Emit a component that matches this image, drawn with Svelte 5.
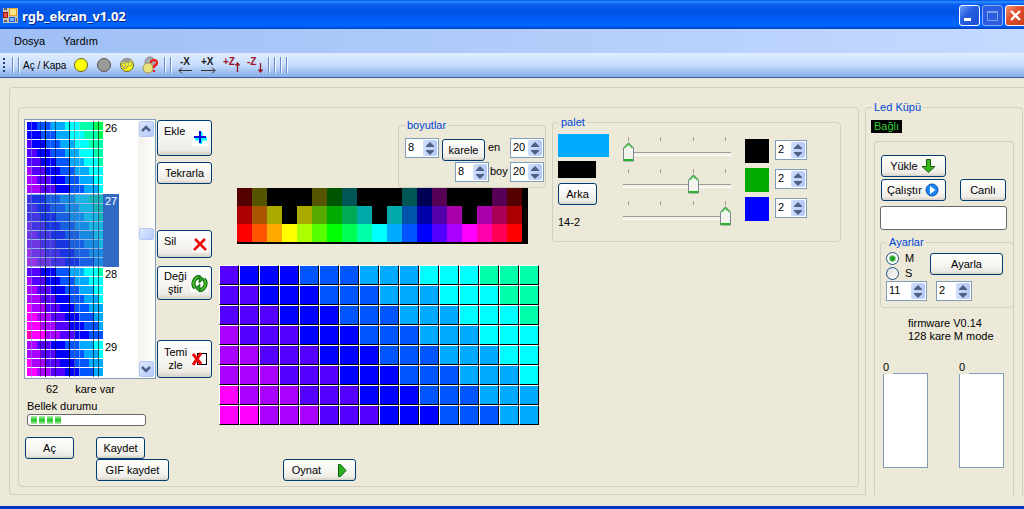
<script lang="ts">
	// Hue steps the cube can show, in the order the wave runs through them
	const wave = [
		'#ff00aa',
		'#ff00ff',
		'#aa00ff',
		'#5500ff',
		'#0000ff',
		'#0055ff',
		'#00aaff',
		'#00ffff',
		'#00ffaa',
		'#00ff55'
	];

	const k = '#000000';
	const colorTable = [
		'#550000', '#555500', k, k, k, '#555500', '#005500', '#005555', k, k, k, '#005555', '#000055', '#550055', k, k, k, '#550055', '#550000',
		'#aa0000', '#aa5500', '#aaaa00', k, '#aaaa00', '#55aa00', '#00aa00', '#00aa55', '#00aaaa', k, '#00aaaa', '#0055aa', '#0000aa', '#5500aa', '#aa00aa', k, '#aa00aa', '#aa0055', '#aa0000',
		'#ff0000', '#ff5500', '#ffaa00', '#ffff00', '#aaff00', '#55ff00', '#00ff00', '#00ff55', '#00ffaa', '#00ffff', '#00aaff', '#0055ff', '#0000ff', '#5500ff', '#aa00ff', '#ff00ff', '#ff00aa', '#ff0055', '#ff0000'
	];

	function makeFrame(shift: number) {
		const cells: string[] = [];
		for (let r = 0; r < 8; r++) {
			for (let c = 0; c < 16; c++) {
				cells.push(wave[3 + Math.floor((c - r + shift) / 3)]);
			}
		}
		return cells;
	}

	const frames = [
		{ nr: 26, cells: makeFrame(4) },
		{ nr: 27, cells: makeFrame(2) },
		{ nr: 28, cells: makeFrame(0) },
		{ nr: 29, cells: makeFrame(-2) }
	];

	let selected = $state(27);
	let current = $derived(frames.find((f) => f.nr === selected)!.cells);

	let sizes = $state({ x: 8, y: 8, en: 20, boy: 20, port: 11, speed: 2 });
	let mode = $state('M');
	let message = $state('');

	let channels = $state([
		{ name: 'Kırmızı', level: 0, step: 2, color: '#000000' },
		{ name: 'Yeşil', level: 2, step: 2, color: '#00aa00' },
		{ name: 'Mavi', level: 3, step: 2, color: '#0000ff' }
	]);
</script>

{#snippet spinner(label: string, value: number, set: (v: number) => void, size: string)}
	<span class="spinner {size}">
		<input type="number" aria-label={label} {value} oninput={(e) => set(Number(e.currentTarget.value))} />
		<span class="arrows">
			<button type="button" aria-label="{label} artır" onclick={() => set(value + 1)}>
				<svg viewBox="0 0 8 5" width="8" height="5"><path d="M4 0L8 4V5H0V4z" fill="#4d6185" /></svg>
			</button>
			<button type="button" aria-label="{label} azalt" onclick={() => set(value - 1)}>
				<svg viewBox="0 0 8 5" width="8" height="5"><path d="M4 5L8 1V0H0V1z" fill="#4d6185" /></svg>
			</button>
		</span>
	</span>
{/snippet}

<div class="window">
	<header class="titlebar">
		<svg width="15" height="15" viewBox="0 0 15 15">
			<rect width="15" height="15" fill="#c8c4b4" />
			<rect x="6" y="0" width="8" height="8" fill="#e8a818" />
			<rect x="7" y="1" width="6" height="6" fill="#ffe48c" />
			<rect x="0" y="4" width="5" height="6" fill="#a01810" />
			<rect x="1" y="5" width="3" height="4" fill="#e85040" />
			<rect x="6" y="9" width="6" height="5" fill="#2860d0" />
			<rect x="7" y="10" width="4" height="3" fill="#80b0ff" />
			<path d="M1 0h3v2H1zM1 12h3v2H1zM13 10h1v4h-1z" fill="#5c6270" />
		</svg>
		<h1>rgb_ekran_v1.02</h1>
		<button type="button" class="caption" aria-label="Simge durumuna küçült">
			<svg width="19" height="19" viewBox="0 0 19 19"><rect x="4" y="12" width="7" height="3" fill="#fff" /></svg>
		</button>
		<button type="button" class="caption dim" aria-label="Ekranı kapla" disabled>
			<svg width="19" height="19" viewBox="0 0 19 19"><path d="M4.5 5.5h10v9h-10zM4 6.5h10" fill="none" stroke="#7e9eee" /></svg>
		</button>
		<button type="button" class="caption close" aria-label="Kapat">
			<svg width="19" height="19" viewBox="0 0 19 19"><path d="M5 5l9 9M14 5l-9 9" stroke="#fff" stroke-width="2.4" /></svg>
		</button>
	</header>

	<nav class="menubar">
		<button type="button">Dosya</button>
		<button type="button">Yardım</button>
	</nav>

	<div class="toolbar">
		<span class="grip"></span>
		<span class="sep"></span>
		<span class="sep"></span>
		<span class="tool-label">Aç / Kapa</span>
		<button type="button" aria-label="Hepsini aç">
			<svg width="16" height="16" viewBox="0 0 16 16"><circle cx="8" cy="8" r="6.5" fill="#ff0" stroke="#66642c" /></svg>
		</button>
		<button type="button" aria-label="Hepsini kapat">
			<svg width="16" height="16" viewBox="0 0 16 16"><circle cx="8" cy="8" r="6.5" fill="#999" stroke="#555" /></svg>
		</button>
		<button type="button" aria-label="Tersle">
			<svg width="16" height="16" viewBox="0 0 16 16">
				<circle cx="8" cy="8" r="6.5" fill="#ff0" stroke="#66642c" />
				<path d="M2 6a6.3 6.3 0 0 1 11-3L8 6 5 5z" fill="#999" />
				<circle cx="5" cy="8" r="2" fill="none" stroke="#999" />
				<circle cx="11" cy="7" r="2" fill="none" stroke="#999" />
				<path d="M4 11q3 2 5-2" fill="none" stroke="#777" />
			</svg>
		</button>
		<button type="button" aria-label="Rastgele">
			<svg width="18" height="18" viewBox="0 0 18 18">
				<circle cx="9" cy="6" r="5" fill="#aaa" stroke="#888" />
				<circle cx="7" cy="12" r="5" fill="#eae27a" stroke="#a09a5c" />
				<path d="M10 7q0-3 3-3t3 3q0 2-3 3v2M13 14v2" fill="none" stroke="#f01818" stroke-width="2.2" />
			</svg>
		</button>
		<span class="sep"></span>
		<span class="sep"></span>
		<button type="button" aria-label="X azalt">
			<svg width="18" height="18" viewBox="0 0 18 18">
				<text x="4" y="9">-X</text>
				<path d="M3 14.5h13M6 11.5l-3 3 3 3" fill="none" stroke="#333" />
			</svg>
		</button>
		<button type="button" aria-label="X artır">
			<svg width="18" height="18" viewBox="0 0 18 18">
				<text x="2" y="9">+X</text>
				<path d="M2 14.5h14M13 11.5l3 3-3 3" fill="none" stroke="#333" />
			</svg>
		</button>
		<button type="button" class="red" aria-label="Z artır">
			<svg width="18" height="18" viewBox="0 0 18 18">
				<text x="1" y="9">+Z</text>
				<path d="M15.5 16V7M13.500 9.500l2-2.500 2 2.500" fill="none" stroke="#901020" stroke-width="1.3" />
			</svg>
		</button>
		<button type="button" class="red" aria-label="Z azalt">
			<svg width="18" height="18" viewBox="0 0 18 18">
				<text x="2" y="9">-Z</text>
				<path d="M15.5 7v9M13.500 13.500l2 2.500 2-2.500" fill="none" stroke="#901020" stroke-width="1.3" />
			</svg>
		</button>
		<span class="sep"></span>
		<span class="sep"></span>
		<span class="sep"></span>
		<span class="sep"></span>
	</div>

	<main class="outer">
		<section class="editor">
			<div class="left">
				<div class="list-row">
					<div class="listbox">
						<ul>
							{#each frames as frame (frame.nr)}
								<li class:selected={frame.nr === selected}>
									<button type="button" onclick={() => (selected = frame.nr)}>
										<span class="thumb">
											{#each frame.cells as color}
												<i style:background-color={color}></i>
											{/each}
										</span>
										<span class="nr">{frame.nr}</span>
									</button>
								</li>
							{/each}
						</ul>
						<div class="scrollbar">
							<button type="button" aria-label="Yukarı">
								<svg width="10" height="8" viewBox="0 0 10 8"><path d="M1 6l4-4 4 4" fill="none" stroke="#4d6185" stroke-width="2.5" /></svg>
							</button>
							<span class="knob"></span>
							<button type="button" aria-label="Aşağı">
								<svg width="10" height="8" viewBox="0 0 10 8"><path d="M1 2l4 4 4-4" fill="none" stroke="#4d6185" stroke-width="2.5" /></svg>
							</button>
						</div>
					</div>

					<div class="actions">
						<button type="button" class="btn add">
							<span>Ekle</span>
							<svg width="16" height="16" viewBox="0 0 16 16">
								<rect width="16" height="16" fill="#fff" />
								<path d="M9 2v12M3 9h12" stroke="#0ff" stroke-width="3" />
								<path d="M8 1v12M2 7h12" stroke="#0000e0" stroke-width="2" />
							</svg>
						</button>
						<button type="button" class="btn repeat">Tekrarla</button>
						<button type="button" class="btn delete">
							<span>Sil</span>
							<svg width="16" height="16" viewBox="0 0 16 16">
								<rect width="16" height="16" fill="#fff" />
								<path d="M3 3l11 11M13 3L2 14" stroke="#f00808" stroke-width="2.5" />
							</svg>
						</button>
						<button type="button" class="btn change">
							<span>Deği<br />ştir</span>
							<svg width="17" height="17" viewBox="0 0 17 17">
								<rect width="17" height="17" fill="#fff" />
								<path d="M4 13Q1 9 3.500 5T9 2.500M13 4q3 4 .5 8T8 14.500" fill="none" stroke="#0c6810" stroke-width="4" />
								<path d="M4 13Q1 9 3.500 5T9 2.500M13 4q3 4 .5 8T8 14.500" fill="none" stroke="#48bc28" stroke-width="2" />
								<path d="M8 0l5 4-5 4zM9 9l-5 4 5 4z" fill="#28982c" stroke="#0c6810" stroke-width=".7" />
							</svg>
						</button>
						<button type="button" class="btn clear">
							<span>Temi<br />zle</span>
							<svg width="16" height="16" viewBox="0 0 16 16">
								<rect width="16" height="16" fill="#fff" />
								<rect x="5.500" y="2.500" width="9" height="11" fill="#fff" stroke="#000" />
								<path d="M1 3l8 10M9 2L1 14" stroke="#e80808" stroke-width="3" />
							</svg>
						</button>
					</div>
				</div>

				<p class="count"><span>62</span><span>kare var</span></p>
				<label class="memory" for="memory">Bellek durumu</label>
				<progress id="memory" max="100" value="28"></progress>
				<div class="files">
					<button type="button" class="btn">Aç</button>
					<button type="button" class="btn save">Kaydet</button>
					<button type="button" class="btn gif">GIF kaydet</button>
				</div>
			</div>

			<div class="middle">
				<fieldset class="group dims">
					<legend>boyutlar</legend>
					<div class="dim-row">
						{@render spinner('Kare x', sizes.x, (v) => (sizes.x = v), 'normal')}
						<button type="button" class="btn">karele</button>
						<span class="dim-label">en</span>
						{@render spinner('en', sizes.en, (v) => (sizes.en = v), 'normal')}
					</div>
					<div class="dim-row">
						{@render spinner('Kare y', sizes.y, (v) => (sizes.y = v), 'normal')}
						<span class="dim-label boy">boy</span>
						{@render spinner('boy', sizes.boy, (v) => (sizes.boy = v), 'normal')}
					</div>
				</fieldset>

				<div class="color-table">
					{#each colorTable as color}
						<i style:background-color={color}></i>
					{/each}
				</div>

				<div class="canvas">
					{#each current as color}
						<i style:background-color={color}></i>
					{/each}
				</div>

				<button type="button" class="btn play">
					<span>Oynat</span>
					<svg width="9" height="13" viewBox="0 0 9 13"><path d="M.5.5h2l5.500 6-5.500 6h-2z" fill="#28b020" stroke="#0c600c" /></svg>
				</button>
			</div>

			<fieldset class="group palette">
				<legend>palet</legend>
				<div class="pens">
					<span class="pen"></span>
					<span class="back"></span>
					<button type="button" class="btn">Arka</button>
					<span>14-2</span>
				</div>
				<div class="sliders">
					{#each channels as channel}
						<div class="slider">
							<span class="ticks"><b></b><b></b><b></b><b></b></span>
							<input type="range" min="0" max="3" aria-label={channel.name} bind:value={channel.level} />
						</div>
					{/each}
				</div>
				<div class="channels">
					{#each channels as channel}
						<div class="channel">
							<span class="swatch" style:background-color={channel.color}></span>
							{@render spinner(channel.name, channel.step, (v) => (channel.step = v), 'small')}
						</div>
					{/each}
				</div>
			</fieldset>
		</section>

		<fieldset class="group cube">
			<legend>Led Küpü</legend>
			<span class="status">Bağlı</span>
			<div class="device">
				<div class="commands">
					<button type="button" class="btn load">
						<span>Yükle</span>
						<svg width="16" height="16" viewBox="0 0 16 16"><path d="M5.5 1.5h4v7H14l-6.500 6L1 8.500h4.500z" fill="#38b818" stroke="#1c5c10" /></svg>
					</button>
					<button type="button" class="btn run">
						<span>Çalıştır</span>
						<svg width="16" height="16" viewBox="0 0 16 16">
							<circle cx="8" cy="8" r="6" fill="#1888f8" stroke="#0c4ca8" />
							<path d="M6 4l5.500 4L6 12z" fill="#fff" />
						</svg>
					</button>
					<button type="button" class="btn live">Canlı</button>
				</div>
				<input class="message" type="text" aria-label="Mesaj" bind:value={message} />

				<fieldset class="group settings">
					<legend>Ayarlar</legend>
					<div class="settings-row">
						<div class="modes">
							<label><input type="radio" name="mode" value="M" bind:group={mode} />M</label>
							<label><input type="radio" name="mode" value="S" bind:group={mode} />S</label>
						</div>
						<button type="button" class="btn">Ayarla</button>
					</div>
					<div class="ports">
						{@render spinner('Port', sizes.port, (v) => (sizes.port = v), 'wide')}
						{@render spinner('Hız', sizes.speed, (v) => (sizes.speed = v), 'medium')}
					</div>
				</fieldset>

				<p class="firmware">firmware V0.14<br />128 kare M mode</p>

				<div class="logs">
					<div class="log">
						<label for="sent">0</label>
						<textarea id="sent"></textarea>
					</div>
					<div class="log">
						<label for="received">0</label>
						<textarea id="received"></textarea>
					</div>
				</div>
			</div>
		</fieldset>
	</main>
</div>

<style>
	:global(body) {
		margin: 0;
		background: #ece9d8;
		font-family: 'Liberation Sans', Arial, sans-serif;
		font-size: 11px;
		line-height: 13px;
		color: #000;
	}

	.window,
	.window * {
		box-sizing: border-box;
	}

	.window {
		display: flex;
		flex-direction: column;
		min-height: 100vh;
		border-bottom: 3px solid #0036c8;
	}

	button,
	input,
	textarea {
		margin: 0;
		padding: 0;
		font: inherit;
		color: inherit;
	}

	button {
		border: 0;
		background: none;
		white-space: nowrap;
	}

	p {
		margin: 0;
	}

	svg {
		display: block;
		flex: none;
	}

	/* title bar */
	.titlebar {
		display: flex;
		align-items: center;
		gap: 2px;
		height: 29px;
		padding: 2px 0 0 3px;
		background: linear-gradient(#0050e8 0%, #2a8cff 6%, #0a5cf0 16%, #0054e3 40%, #005cf8 65%, #0066ff 88%, #0040c0 100%);
	}

	h1 {
		flex: 1;
		margin: 0;
		padding-left: 2px;
		font-family: 'Noto Sans', sans-serif;
		font-size: 13px;
		line-height: 18px;
		font-weight: bold;
		color: #fff;
		text-shadow: 1px 1px 0 #0a2a88;
	}

	.caption {
		width: 21px;
		height: 21px;
		flex: none;
		border: 1px solid #fff;
		border-radius: 3px;
		background: linear-gradient(135deg, #6a9cf8, #2860e0 40%, #1c4cd4);
	}

	.dim {
		border-color: #8aacf0;
		background: #2c5ce0;
	}

	.close {
		margin-right: -2px;
		background: linear-gradient(135deg, #f09878, #e05030 40%, #c83c14);
	}

	/* menu and tool bar */
	.menubar {
		display: flex;
		gap: 18px;
		height: 24px;
		padding-left: 14px;
		background: linear-gradient(90deg, #9ebef5, #c4daff);
	}

	.toolbar {
		display: flex;
		align-items: center;
		height: 25px;
		padding-left: 3px;
		border-bottom: 1px solid #3b61a8;
		background: linear-gradient(#e0edff, #c8ddfc 50%, #85abe6);
	}

	.toolbar button {
		display: flex;
		justify-content: center;
		width: 23px;
	}

	.toolbar text {
		font-size: 10px;
		font-weight: bold;
		fill: #222;
	}

	.toolbar .red text {
		fill: #a01428;
	}

	.grip {
		width: 2px;
		height: 14px;
		margin-right: 4px;
		background: repeating-linear-gradient(#27417a 0 2px, transparent 2px 4px);
	}

	.sep {
		width: 2px;
		height: 16px;
		margin: 0 1px 0 3px;
		border-left: 1px solid #6a8ccb;
		border-right: 1px solid #f1f9ff;
	}

	.tool-label {
		padding: 0 3px 0 2px;
		font-size: 10px;
	}

	/* group boxes and common controls */
	.outer {
		display: flex;
		align-items: stretch;
		flex: 1;
		gap: 6px;
		margin: 9px 0 11px 9px;
		padding: 19px 1px 0 8px;
		border: 1px solid #d0d0bf;
		border-right: 0;
		border-radius: 4px 0 0 4px;
	}

	.group {
		min-width: 0;
		margin: 0;
		padding: 0;
		border: 1px solid #d0d0bf;
		border-radius: 4px;
	}

	.group legend {
		margin-left: 6px;
		padding: 0 2px;
		color: #0046d5;
	}

	.btn {
		display: flex;
		align-items: center;
		justify-content: center;
		height: 22px;
		padding: 0 5px;
		border: 1px solid #003c74;
		border-radius: 3px;
		background: linear-gradient(#fff, #f4f3ee 60%, #ecebe5 85%, #d6d0c5);
	}

	.spinner {
		display: flex;
		flex: none;
		height: 20px;
		border: 1px solid #7f9db9;
		background: #fff;
	}

	.normal {
		width: 34px;
	}

	.small {
		width: 32px;
	}

	.medium {
		width: 36px;
	}

	.wide {
		width: 41px;
	}

	.spinner input {
		flex: 1;
		min-width: 0;
		height: 16px;
		padding-left: 2px;
		border: 0;
		outline: 0;
		background: none;
		appearance: textfield;
	}

	.spinner input::-webkit-inner-spin-button {
		appearance: none;
	}

	.arrows {
		display: flex;
		flex-direction: column;
		width: 14px;
		margin: 1px;
		border-radius: 2px;
		background: linear-gradient(90deg, #cfdcfd, #b4c9f8);
	}

	.arrows button {
		display: flex;
		flex: 1;
		align-items: center;
		justify-content: center;
	}

	/* editor panel */
	.editor {
		display: flex;
		align-items: flex-start;
		flex: 1;
		margin-bottom: 7px;
		padding: 11px 5px 5px;
		border: 1px solid #d0d0bf;
		border-radius: 4px;
	}

	.left {
		width: 195px;
		flex: none;
	}

	.list-row {
		display: flex;
		gap: 1px;
	}

	.listbox {
		display: flex;
		justify-content: space-between;
		width: 132px;
		height: 260px;
		padding: 1px;
		border: 1px solid #7f9db9;
		background: #fff;
	}

	.listbox ul {
		margin: 0;
		padding: 0 0 0 1px;
		overflow: hidden;
		list-style: none;
	}

	.listbox li button {
		display: flex;
		width: 92px;
		height: 73px;
	}

	.selected button {
		background: #316ac5;
		color: #fff;
	}

	.thumb {
		position: relative;
		display: grid;
		grid-template-columns: repeat(16, 1fr);
		grid-template-rows: repeat(8, 8px);
		row-gap: 1px;
		width: 76px;
		height: 73px;
		padding: 1px 0;
		background: #fff;
	}

	/* gaps left between the led columns when the frame is scaled down */
	.thumb::after {
		content: '';
		position: absolute;
		inset: 0;
		background: linear-gradient(
			90deg,
			transparent 4px, #8080ff99 4px 5px,
			transparent 5px 13px, #00000055 13px 14px,
			transparent 14px 18px, #000000dd 18px 19px,
			transparent 19px 23px, #a0a0ff66 23px 24px,
			transparent 24px 28px, #00000077 28px 29px,
			transparent 29px 42px, #000000bb 42px 43px,
			transparent 43px 47px, #70707099 47px 48px,
			transparent 48px 52px, #b0d0ff77 52px 53px,
			transparent 53px 66px, #00000099 66px 67px,
			transparent 67px 71px, #00000099 71px 72px,
			transparent 72px
		);
	}

	.selected .thumb::before {
		content: '';
		position: absolute;
		z-index: 1;
		inset: 0;
		background: #316ac580;
	}

	.nr {
		padding: 1px 0 0 2px;
	}

	.scrollbar {
		display: flex;
		flex-direction: column;
		justify-content: space-between;
		align-items: center;
		width: 16px;
		background: linear-gradient(90deg, #f3f1ec, #fefefb);
	}

	.scrollbar button,
	.knob {
		display: flex;
		align-items: center;
		justify-content: center;
		width: 15px;
		height: 16px;
		border: 1px solid #b4c8f6;
		border-radius: 2px;
		background: linear-gradient(135deg, #dce7ff, #b7cbfa);
	}

	.knob {
		height: 12px;
		margin-bottom: 30px;
	}

	.actions {
		padding-top: 1px;
		text-align: center;
	}

	.actions .btn {
		justify-content: space-between;
		width: 55px;
		padding: 0 3px 0 6px;
	}

	.actions .add {
		height: 36px;
	}

	.actions .add span,
	.actions .delete span {
		align-self: flex-start;
		padding-top: 4px;
	}

	.actions .repeat {
		justify-content: center;
		margin-top: 6px;
		padding: 0;
	}

	.actions .delete {
		height: 28px;
		margin-top: 46px;
	}

	.actions .change {
		height: 34px;
		margin-top: 8px;
	}

	.actions .clear {
		height: 38px;
		margin-top: 40px;
	}

	.count {
		display: flex;
		gap: 17px;
		padding: 4px 0 4px 22px;
	}

	.memory {
		display: block;
		padding-left: 3px;
	}

	progress {
		display: block;
		width: 119px;
		height: 12px;
		margin: 1px 0 11px 3px;
		padding: 1px 3px;
		border: 1px solid #686868;
		border-radius: 3px;
		background: #fff;
		appearance: none;
	}

	progress::-webkit-progress-bar {
		background: transparent;
	}

	progress::-webkit-progress-value {
		background:
			linear-gradient(#ffffffaa, transparent 45% 60%, #ffffffaa),
			repeating-linear-gradient(90deg, #2cc82c 0 6px, #fff 6px 8px);
	}

	.files {
		display: grid;
		grid-template-columns: 49px 73px;
		column-gap: 22px;
		padding-left: 1px;
	}

	.files .save {
		width: 49px;
	}

	.files .gif {
		grid-column: 2;
	}

	.middle {
		display: flex;
		flex-direction: column;
		width: 327px;
		flex: none;
	}

	.dims {
		align-self: flex-end;
		width: 148px;
		height: 69px;
	}

	.dims .btn {
		width: 43px;
		margin: 1px 3px 0;
	}

	.dim-row {
		display: flex;
		justify-content: flex-end;
		align-items: flex-start;
		height: 24px;
		padding: 0 1px;
	}

	.dims legend + .dim-row {
		margin-top: 6px;
	}

	.dim-label {
		width: 22px;
		padding-top: 3px;
	}

	.boy {
		width: 21px;
		padding-left: 1px;
	}

	.color-table {
		display: grid;
		grid-template-columns: repeat(19, 15px);
		grid-auto-rows: 18px;
		width: 291px;
		margin-left: 18px;
		padding-bottom: 2px;
		background: #000;
	}

	.canvas {
		display: grid;
		grid-template-columns: repeat(16, 20px);
		grid-auto-rows: 20px;
		margin: 21px 0 34px;
	}

	.canvas i {
		border: 1px solid #fff;
		border-right-color: #000;
		border-bottom-color: #000;
	}

	.play {
		width: 73px;
		margin-left: 64px;
		gap: 17px;
		padding: 0;
	}

	/* palette */
	.palette {
		display: flex;
		width: 289px;
		height: 126px;
		margin: -3px 0 0 6px;
	}

	.pens {
		display: flex;
		flex-direction: column;
		align-items: flex-start;
		width: 65px;
		padding: 5px 0 0 5px;
	}

	.pen {
		width: 51px;
		height: 23px;
		margin-bottom: 4px;
		background: #00aaff;
	}

	.back {
		width: 38px;
		height: 17px;
		margin-bottom: 5px;
		background: #000;
	}

	.pens .btn {
		width: 39px;
		margin-bottom: 11px;
	}

	.sliders {
		display: flex;
		flex-direction: column;
		gap: 7px;
		width: 127px;
		padding: 8px 0 0 5px;
	}

	.ticks {
		display: flex;
		justify-content: space-between;
		width: 108px;
		padding: 0 5px;
	}

	.ticks b {
		width: 1px;
		height: 4px;
		background: #a0a090;
	}

	input[type='range'] {
		display: block;
		width: 108px;
		height: 21px;
		background: linear-gradient(#9d9c99 0 1px, #f2f1e8 1px 3px, #fff 3px 4px) 0 11px / 100% 4px no-repeat;
		appearance: none;
	}

	input[type='range']::-webkit-slider-thumb {
		width: 11px;
		height: 20px;
		background: url("data:image/svg+xml,%3Csvg xmlns='http://www.w3.org/2000/svg' width='11' height='20'%3E%3Cpath d='M.5 6l5-5.500 5 5.500v13H.5z' fill='%23f4f4ee' stroke='%23778892'/%3E%3Cpath d='M1.500 6l4-4 4 4' fill='none' stroke='%2340c040' stroke-width='1.500'/%3E%3Cpath d='M1 17h9v2H1z' fill='%2322b822'/%3E%3C/svg%3E");
		appearance: none;
	}

	.channels {
		display: flex;
		flex-direction: column;
		gap: 5px;
		padding-top: 10px;
	}

	.channel {
		display: flex;
		gap: 6px;
	}

	.channel .spinner {
		margin-top: 1px;
	}

	.swatch {
		width: 24px;
		height: 24px;
	}

	/* cube panel */
	.cube {
		display: flex;
		flex-direction: column;
		width: 158px;
		flex: none;
		margin: -6px 0 -1px;
		border-bottom: 0;
		border-radius: 4px 4px 0 0;
		background: #ece9d8;
	}

	.status {
		align-self: flex-start;
		margin: 6px 0 8px 5px;
		padding: 0 3px;
		background: #000;
		color: #32cd32;
	}

	.device {
		flex: 1;
		margin: 0 8px;
		padding: 13px 0 0 5px;
		border: 1px solid #d0d0bf;
		border-bottom: 0;
		border-radius: 4px 4px 0 0;
	}

	.commands {
		display: grid;
		grid-template-columns: 65px 46px;
		gap: 2px 14px;
		padding-left: 1px;
	}

	.load {
		justify-content: space-evenly;
	}

	.run {
		grid-row: 2;
		justify-content: space-between;
	}

	.live {
		grid-row: 2;
	}

	.message {
		display: block;
		width: 127px;
		height: 24px;
		margin: 5px 0 6px;
		padding: 0 3px;
		border: 1px solid #686868;
		border-radius: 3px;
		background: #fff;
	}

	.settings {
		height: 72px;
		margin-right: -1px;
	}

	.settings-row {
		display: flex;
		gap: 16px;
		padding: 2px 0 0 5px;
	}

	.settings .btn {
		width: 73px;
		margin-top: 2px;
	}

	.modes {
		width: 28px;
	}

	.modes label {
		display: flex;
		align-items: center;
		gap: 6px;
		height: 15px;
	}

	input[type='radio'] {
		width: 13px;
		height: 13px;
		flex: none;
		border: 1px solid #1c5180;
		border-radius: 50%;
		background: linear-gradient(135deg, #dcdcd7, #fff);
		appearance: none;
	}

	input[type='radio']:checked {
		background: radial-gradient(circle, #21a121 0 2px, #fff 4px);
	}

	.ports {
		display: flex;
		gap: 9px;
		padding-left: 5px;
	}

	.firmware {
		padding: 9px 0 18px 28px;
	}

	.logs {
		display: flex;
		gap: 31px;
		padding-left: 3px;
	}

	.log label {
		position: relative;
		display: block;
		width: 10px;
		margin-bottom: -1px;
		background: #ece9d8;
	}

	.log textarea {
		display: block;
		width: 45px;
		height: 95px;
		border: 1px solid #7f9db9;
		border-radius: 0;
		background: #fff;
		outline: 0;
		resize: none;
	}
</style>
